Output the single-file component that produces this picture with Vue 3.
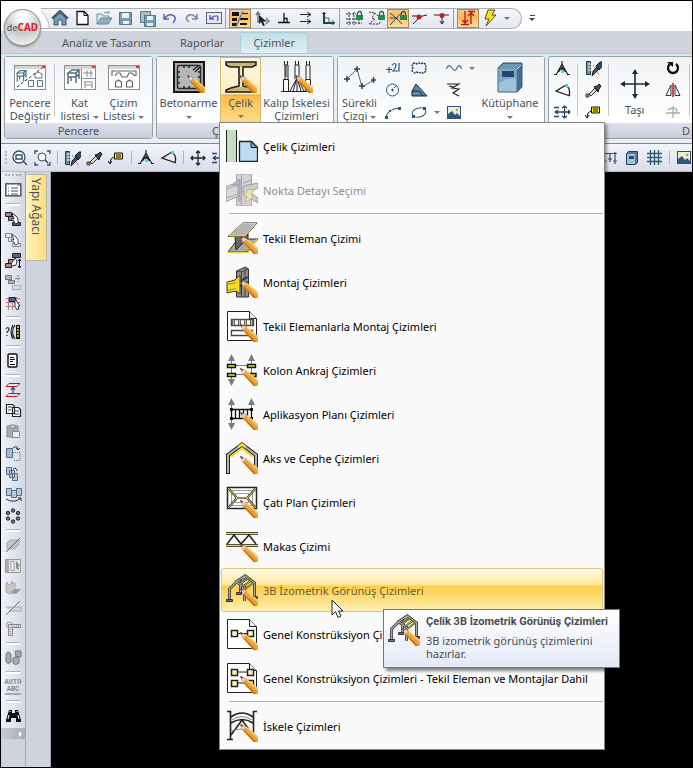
<script setup>
import { h } from 'vue'

const pencil = '<path d="M17 20.500l3-3.500L32 26.500V32h-4.500z" fill="#f0a22c"/><path d="M19.500 17.500l1-1L32 26v2.500z" fill="#f9c873"/><path d="M17 20.500L28 32h2.500L18 20z" fill="#b8741c"/><path d="M14.500 14.500l6 2.200-1 2.300-2.500 1.500z" fill="#f3cdb0" stroke="#a07860" stroke-width=".5"/><path d="M14 14l3 1.200-1.500 1.800z" fill="#4a2a30"/>'
const lock = '<path d="M12.500 5V3.500a2 2 0 0 1 4 0V5" fill="none" stroke="#186b3c" stroke-width="1.300"/><rect x="11" y="5" width="7" height="5" fill="#1f8b4c"/>'
const brushHead = '<path d="M8 11l4-4 2 2-4 4-3 3z" fill="#555" stroke="#222"/><path d="M11 6l4-4h3v3l-4 5z" fill="#2b4a66" stroke="#111"/>'
const frame3d = '<g fill="none" stroke="#3c3c3c" stroke-width="3"><path d="M3.500 26V15l7-7M14.500 19V10l5-8 9 7v14M10 8l9-6M18.500 27V13l-8-5"/></g><g fill="none" stroke="#a9a9a9" stroke-width="1.400"><path d="M3.500 26V15l7-7M14.500 19V10l5-8 9 7v14M10 8l9-6M18.500 27V13l-8-5"/></g><path d="M14 10l9-6M17 12.500l8-6M19 15l8-6" stroke="#3c3c20" stroke-width="2"/><path d="M14 10l9-6M17 12.500l8-6M19 15l8-6" stroke="#cdbd40"/><path d="M.5 25.500h6v2h-6zM10.500 18.500h5v2h-5zM25.500 22.500h6v2h-6z" fill="#777" stroke="#333"/>'
const sheet = '<path d="M1.500 1.500h22l7 7v22h-29z" fill="#fff" stroke="#222"/><path d="M23.500 1.500v7h7" fill="#eee" stroke="#222"/>'
const win = '<rect x=".5" y=".5" width="31" height="24" fill="#fff" stroke="#8d8d8d"/><path d="M1 2.500h30" stroke="#d5d5d5" stroke-width="3"/><path d="M28 1h3v2h-3z" fill="#e33"/>'
const cube = '<path d="M4 8l4-3h7l-3 3zM4 8v11M12 8v10M15 5v9M7 12v4M4 12h8l3-3" fill="none" stroke="#4d7088" stroke-width="1.500"/>'

// name: [width, height, shapes]
const icons = {
  home: [18, 16, '<path d="M3 8v7h4v-5h4v5h4V8L9 3z" fill="#7d9bb0" stroke="#37556b"/><path d="M1 8.500L9 1l8 7.500" fill="none" stroke="#37556b" stroke-width="2"/>'],
  file: [14, 16, '<path d="M2 1.500h7l4 4v9H2z" fill="#fff" stroke="#111" stroke-width="1.300"/><path d="M9 1.500v4h4" fill="none" stroke="#111"/>'],
  open: [18, 16, '<path d="M2 14V4h5l1 2h6v2" fill="#dde8ee" stroke="#6f94a8"/><path d="M2 14l4-6h11l-4 6z" fill="#8fb0c0" stroke="#5f8498"/><path d="M9 3q3-2 5 0m0-2v2h-2" fill="none" stroke="#6f94a8"/>'],
  save: [16, 16, '<path d="M1.500 2.500h12v12h-12z" fill="#7b9caf" stroke="#52788e"/><path d="M4 3h7v5H4zM5 11h6v3H5z" fill="#e9f1f5"/>'],
  saveAll: [18, 17, '<path d="M1.500 1.500h10v11h-10z" fill="#a9c0cc" stroke="#52788e"/><path d="M5.500 5.500h11v11h-11z" fill="#7b9caf" stroke="#52788e"/><path d="M8 6h6v4H8zM8 13h6v3H8z" fill="#e9f1f5"/>'],
  undo: [16, 12, '<path d="M2 2v5h5M2 7q4-5 8-4 4 1 3 5l-2 3" fill="none" stroke="#5f5fb0" stroke-width="1.500"/>'],
  redo: [16, 12, '<path d="M13 2v5H8M13 7Q10 2 5 3 1 5 3 8l2 2" fill="none" stroke="#7c85b8" stroke-width="1.500"/>'],
  undoBox: [16, 12, '<rect x=".5" y=".5" width="15" height="11" fill="#e6e9f2" stroke="#5b6478"/><path d="M4 3v4h4M4 7q4-4 7-3 2 2 0 5" fill="none" stroke="#5f5fb0" stroke-width="1.300"/>'],
  layers: [20, 18, '<path d="M2 2h7v4H2zM12 3h6v1h-6zM2 8h5v3H2zM10 8h8v2h-8zM2 13h5v3H2zM10 13h7v2h-7z" fill="#111"/><path d="M6 17L13 1" stroke="#5b87a8" stroke-width="1.500"/>'],
  axes: [16, 16, '<path d="M4 13V2M2 5l2-3 2 3M4 11h9M12 8l3 3-3 3" fill="none" stroke="#6c7f96" stroke-width="1.500"/><path d="M5 5l7 6-3 .5 2 4-2 .5-2-4-2 2z" fill="#222"/>'],
  perp: [14, 12, '<path d="M1 10.500h12M7 1v9M7 6.500h3v4" fill="none" stroke="#111" stroke-width="1.300"/>'],
  parallel: [14, 14, '<path d="M1 3.500h11M1 10.500h11M8 1l4 2.500L8 6M8 8l4 2.500L8 13" fill="none" stroke="#222"/>'],
  ortho: [15, 14, '<path d="M3 1v11h11" fill="none" stroke="#27404f" stroke-width="2"/><path d="M4 7h4v4M11 9l3 3-3 2M1 3l2-2 2 2" fill="none" stroke="#3d6d5d"/>'],
  gridLock: [18, 16, '<path d="M4 2v13M9 2v13M14 9v6M1 4h10M1 9h12M1 13h16" stroke="#333" stroke-dasharray="2 1"/>' + lock],
  polyLock: [18, 16, '<path d="M2 2l6 1-3 5 3 1-6 5h10l2-3M8 3l3 3" fill="none" stroke="#333" stroke-dasharray="2 1"/>' + lock],
  snapLock: [18, 16, '<path d="M1 3l6 5 6 6M13 2L1 15M1 8h8" stroke="#2b4560" fill="none"/>' + lock],
  snapEnd: [18, 14, '<path d="M2 13l7-7M7 6l9-2M1 5h6" stroke="#222"/><circle cx="8" cy="6" r="2.500" fill="#d01818"/>'],
  snapMid: [18, 14, '<path d="M1 4h15M9 5v8M7 10l2 3 2-3" stroke="#222" fill="none"/><circle cx="9" cy="4.500" r="2.500" fill="#d01818"/>'],
  updown: [16, 16, '<path d="M5 1v12M2 10l3 3 3-3M1 14.500h8M11 14V3M8 6l3-3 3 3M8 1.500h7" fill="none" stroke="#c01010" stroke-width="1.300"/>'],
  bolt: [16, 18, '<path d="M6 1h7l-3 5h4L4 17l3-7H3z" fill="#f2e428" stroke="#55500a"/>'],
  winSwitch: [32, 25, win + '<g transform="scale(.8) translate(0 2)">' + cube + '</g><path d="M3 22L28 3" stroke="#333" stroke-dasharray="3 2"/><path d="M14.500 15.500h5v6h-5zM23.500 15.500h5v6h-5zM21 9l3-2 4 2v4h-7z" fill="none" stroke="#5a7482"/>'],
  winFloor: [32, 25, win + cube + '<path d="M17.500 4v20M17 13.500h14M19 8h10M23 5v7M27 5v7M20 17h8M21 17v6M28 17v6M21 20h7" stroke="#7f8b92" fill="none"/>'],
  winDraw: [32, 25, win + '<path d="M4 11V6h24v5M7 11l2-3h3l2 4h5l2-4h3l3 3M7.500 22v-5l3-2 3 2v5zM18.500 22v-5l3-2 3 2v5z" fill="none" stroke="#5c6a72" stroke-width="1.200"/>'],
  concrete: [32, 32, '<rect x="1" y="1" width="30" height="30" fill="#a9a9a9" stroke="#1a1717" stroke-width="2"/><rect x="4.500" y="4.500" width="23" height="23" rx="2" fill="#b7b7b7" stroke="#2a2a2a" stroke-width="1.500"/><path d="M11 5v2M16 5v2M5 11h2M5 16h2M5 22h2M11 27v-2M16 27v-2M27 11h-2M27 16h-2M20 9l5-4M22 11l5-5" stroke="#222" stroke-width="1.500"/>' + pencil],
  steel: [32, 32, '<path d="M1 1h30v3l-4 2H18v19l8 2 5 2v2H1v-2l5-2 8-2V6H5L1 4z" fill="#c9b870" stroke="#191919" stroke-width="1.500"/><path d="M16 6v20" stroke="#eee5c0" stroke-width="2"/>' + pencil],
  scaffold: [32, 32, '<g fill="none" stroke="#222"><path d="M3.500 0v4h3V0M5 4v12M4 4v14M7 4v14M2.500 18.500h5v12h-5zM14.500 0v4h3V0M14 4v14M18 4v14M25.500 0v4h3V0M25 4v14M29 4v14M24.500 18.500h5v12h-5zM0 30.500h30M9 30l7-13 7 13M12 30l4-13 4 13M16 18v12"/></g>' + pencil],
  polyline: [32, 24, '<path d="M3 14L13 4l5 18 12-7" fill="none" stroke="#4b6f8a"/><path d="M0 14h6M3 11v6M10 4h6M13 1v6M15 21h6M18 18v6M27 15h5M29.500 12v6" stroke="#27465e" stroke-width="1.500"/>'],
  plusTwo: [14, 12, '<path d="M0 7.500h6M3 5v6M6 3q3-3 4 0 0 3-3 6h6V1" fill="none" stroke="#2d5878" stroke-width="1.200"/>'],
  cloud: [16, 12, '<path d="M2 2q2-2 4 0 2-2 4 0 2-2 4 0 2 2 0 4 2 2 0 4-2 2-4 0-2 2-4 0-2 2-4 0-2-2 0-4-2-2 0-4z" fill="#eaf3fb" stroke="#13293b" stroke-width="1.300" stroke-dasharray="2 1"/>'],
  wave: [16, 8, '<path d="M0 5q3-6 6-1t5 0 5 1" fill="none" stroke="#4b7da0" stroke-width="1.300"/>'],
  circle: [16, 14, '<circle cx="7.500" cy="7" r="6" fill="none" stroke="#2d5878"/><path d="M6 7h3M7.500 5.500v3M9 5l3-3" stroke="#2d5878"/>'],
  wedge: [16, 14, '<path d="M1 13V8L5 1l11 12z" fill="#5d87a5" stroke="#16262f"/><path d="M1 8h7l4 5" fill="none" stroke="#16262f"/>'],
  zig: [14, 14, '<path d="M0 1h12L5 5l7 1-6 4 6 3M2 3l4 1" fill="none" stroke="#222" stroke-width="1.200"/>'],
  arc: [16, 13, '<path d="M1 11Q3 3 14 2" fill="none" stroke="#2d5878" stroke-width="1.200"/><path d="M0 10h3v3H0zM13 1h3v3h-3zM4 4h2v2H4z" fill="#2d5878"/>'],
  ellipse: [16, 13, '<ellipse cx="8" cy="6.500" rx="7" ry="4.500" fill="none" stroke="#2d5878" transform="rotate(-15 8 6.500)"/><path d="M1 9h3v3H1zM12 1h3v3h-3z" fill="#2d5878"/>'],
  picture: [14, 13, '<rect x=".5" y=".5" width="13" height="12" fill="#e5efd9" stroke="#2d5070"/><path d="M1 12V8l4-3 3 4 2-2 3 3v2z" fill="#2f5876"/><circle cx="10" cy="4" r="1.300" fill="#d29040"/>'],
  book: [26, 32, '<path d="M1 7l5-5h19v24l-5 5H1z" fill="#3e6f8c" stroke="#3d5c70"/><path d="M1.500 7.500h18v23h-18z" fill="#9fc3da"/><path d="M2 8h17v10q-8-2-17 4z" fill="#7da8c4"/><path d="M2 7l4-4h18l-4 4z" fill="#6d9aae"/><path d="M20 8l4-4" stroke="#d5e8f0"/><rect x="5" y="10" width="12" height="6" fill="#24486a"/>'],
  compassA: [16, 15, '<path d="M7 8h3v4H7z" fill="#39e2f0"/><path d="M8 0v4M8 3L2 14M8 3l6 11M4.500 11L8 6l3.500 5M8 6v3M0 13.500h3M13 13.500h3" fill="none" stroke="#222" stroke-width="1.200"/>'],
  angle: [17, 15, '<path d="M16 13L2 8l10-6M12 2q5 4 3 11M2 8l4-2" fill="none" stroke="#222" stroke-width="1.300"/><path d="M11 1h3v3h-3z" fill="#2ae0f0"/>'],
  moveH: [17, 14, '<path d="M0 2.500h5M0 11.500h5M1 7h15M10.500 1v12M8 3l2.500-2L13 3M8 11l2.500 2 2.500-2M14 5l2 2-2 2M4 5L1 7l3 2" fill="none" stroke="#27465e" stroke-width="1.300"/>'],
  ruler: [17, 16, '<path d="M1.500 1.500h4v13h-4z" fill="#6d8ca5" stroke="#27404f"/><path d="M3 4h3M3 7h3M3 10h3" stroke="#fff"/><path d="M7 15l8-8M8 5l6 10" stroke="#999"/>' + brushHead],
  brush: [17, 16, '<path d="M1 12h3v3H1z" fill="#888" stroke="#444"/><path d="M4 12l6-6 2 2-6 6z" fill="#e5d9c0" stroke="#333"/><path d="M9 5l3-1 2-2 2 2-2 3-1 3z" fill="#3d4c58" stroke="#111"/>'],
  note: [16, 14, '<path d="M6.500 2h8v6h-8z" fill="#f8ee1c" stroke="#111"/><path d="M8 4h5M8 6h5M6 6Q2 7 2 12M0 10l2 3 2-3" fill="none" stroke="#111"/>'],
  move: [30, 30, '<path d="M15 3v24M3 15h24" stroke="#202a30" stroke-width="1.600"/><path d="M15 0l3 5h-6zM15 30l3-5h-6zM0 15l5-3v6zM30 15l-5-3v6z" fill="#202a30"/>'],
  rotate: [14, 14, '<path d="M4 3a5 5 0 1 0 6 0" fill="none" stroke="#111" stroke-width="2.300"/><path d="M1 1h6v5z" fill="#111"/>'],
  mirror: [16, 14, '<path d="M1 12.500h5V2zM15 12.500h-5V2z" fill="#fff" stroke="#333"/><path d="M8 0v14" stroke="#b01c1c" stroke-width="1.500"/>'],
  scaleOff: [16, 14, '<path d="M1 8h14M8 1v12M3 5q5-4 9 0l-2 4" fill="none" stroke="#a5adb5" stroke-width="1.300"/>'],
  zoomBox: [16, 16, '<circle cx="7" cy="7" r="6" fill="#fff" stroke="#34506a" stroke-width="1.300"/><path d="M4 5h6v4H4zM11 11l4 4" fill="none" stroke="#34506a" stroke-width="1.500"/>'],
  zoomAll: [17, 16, '<path d="M1 4V1h3M13 1h3v3M16 12v3h-3M4 15H1v-3" fill="none" stroke="#34506a" stroke-width="1.300"/><circle cx="8" cy="7" r="4" fill="#fff" stroke="#34506a"/><path d="M11 10l3 3" stroke="#34506a" stroke-width="1.500"/>'],
  moveS: [16, 16, '<path d="M8 1v14M1 8h14M6 3l2-2 2 2M6 13l2 2 2-2M3 6L1 8l2 2M13 6l2 2-2 2" fill="none" stroke="#222" stroke-width="1.300"/>'],
  dims: [16, 14, '<path d="M1 2.500h14M2 1v12M8 2v4M13 1v12M0 10h4M11 10h4M6 8h4M8 6v5" fill="none" stroke="#34506a" stroke-width="1.200"/>'],
  bookS: [14, 16, '<path d="M1.500 3.500l2-2h9v11l-2 2h-9z" fill="#4f7f9c" stroke="#24405a"/><path d="M2 4h8v10H2z" fill="#9fc3da"/><path d="M4 6h5v3H4z" fill="#24486a"/>'],
  grid: [15, 15, '<path d="M3.500 0v15M7.500 0v15M11.500 0v15M0 3.500h15M0 7.500h15M0 11.500h15" stroke="#2d5878" stroke-width="1.300"/>'],
  list: [17, 14, '<rect x=".8" y=".8" width="15" height="12" fill="#fff" stroke="#555" stroke-width="1.500"/><path d="M3 5h1M3 8h1M3 11h1M6 5h7M6 8h7M6 11h7" stroke="#2f5876"/><path d="M12 2h3" stroke="#e33"/>'],
  maskA: [16, 16, '<path d="M.5 1.500h6v4h-6zM3.500 5.500h6v4h-6z" fill="#b48080" stroke="#222"/><path d="M7.500 11.500h8v3h-8z" fill="#5c5c88" stroke="#222"/><path d="M7 2l4 3 2 3v4l-3 1-1-3-3-2 1-1 2 1z" fill="#fff" stroke="#222" stroke-width=".9"/>'],
  maskB: [16, 16, '<path d="M.5 1.500h6v4h-6zM3.500 5.500h6v4h-6zM7.500 11.500h8v3h-8z" fill="#e6e6ea" stroke="#888"/><path d="M7 2l4 3 2 3v4l-3 1-1-3-3-2 1-1 2 1z" fill="#fff" stroke="#444" stroke-width=".9"/>'],
  maskC: [16, 16, '<path d="M7.500.5h8v4h-8z" fill="#5c5c88" stroke="#222"/><path d="M3.500 6.500h5v4h-5zM.5 10.500h6v4h-6z" fill="#b48080" stroke="#222"/><path d="M10 5l2 3-1 4-4 1-1-2 2-3z" fill="#fff" stroke="#222" stroke-width=".9"/><path d="M14.500 6v9M13 8l1.500-2L16 8M13 13l1.500 2 1.500-2" stroke="#111" fill="none"/>'],
  maskD: [16, 16, '<path d="M.5 1.500h6v4h-6zM3.500 6.500h6v3h-6z" fill="#b4b4b4" stroke="#777"/><path d="M7.500 11.500h8v4h-8z" fill="#d8dae2" stroke="#aaa"/><path d="M13 1v7M10 4.500h6" stroke="#777" stroke-dasharray="2 1"/>'],
  table: [16, 16, '<path d="M1 3.500h14M1 7.500h14M1 11.500h12M3.500 2v13M7.500 2v13M11.500 2v13" stroke="#b08080"/><path d="M4.500 2.500h6v4h-6z" fill="#5c5c88" stroke="#222"/><path d="M10 4l5 7h-2l1 3-2 .5-2-3z" fill="#fff" stroke="#222" stroke-width=".9"/>'],
  query: [16, 16, '<path d="M1 5q2-3 3 0 0 2-2 3v1M2 11v1M10 1Q5 8 10 15M8 1Q4 8 8 15" fill="none" stroke="#222" stroke-width="1.200"/><path d="M11 1h4v14h-4z" fill="#111"/><path d="M13 2v12" stroke="#f5e63c" stroke-width="1.500" stroke-dasharray="2 1"/>'],
  page: [12, 16, '<rect x="1" y="1" width="9" height="13" rx="1" fill="#fff" stroke="#111" stroke-width="1.400"/><path d="M3 4.500h4M3 6.500h5M3 8.500h3M3 11.500h5" stroke="#111"/>'],
  level: [16, 16, '<path d="M1 4.500L4 1.500h11l-3 3zM1 14.500l3-3h11l-3 3z" fill="none" stroke="#b01c1c"/><path d="M8 12V6M6 8l2-3 2 3" stroke="#2d5878" fill="none" stroke-width="1.300"/>'],
  copy: [17, 15, '<path d="M1.500 1.500h6l2 2v7h-8zM7.500 4.500h6l2 2v7h-8z" fill="#fff" stroke="#222" stroke-width="1.200"/><path d="M3 4h4M3 7h3M9 8h5M9 11h5" stroke="#345"/>'],
  paste: [16, 15, '<path d="M2 2h11v11H2z" fill="#aaa" stroke="#888"/><path d="M5 1h5v3H5z" fill="#ddd" stroke="#888"/><path d="M7.500 7.500h7v6h-7z" fill="#eee" stroke="#888"/>'],
  moveSel: [16, 16, '<path d="M1.500 3.500h6v9h-6z" fill="#a9b8d0" stroke="#566a88"/><path d="M8 7.500h7v8H8" fill="none" stroke="#566a88" stroke-dasharray="1 1"/><path d="M8 3q4-3 5 1M11 3l2 2 2-2" fill="none" stroke="#123a4a"/>'],
  copySel: [16, 16, '<path d="M1.500 1.500h5v7h-5zM4.500 4.500h5v7h-5zM7.500 7.500h5v7h-5z" fill="#b9c6dc" stroke="#566a88"/><path d="M8 3q4-2 4 2" fill="none" stroke="#123a4a"/>'],
  arraySel: [17, 16, '<path d="M1.500 1.500h5v7h-5zM6.500 3.500h5v7h-5zM11.500 1.500h5v7h-5z" fill="#b9c6dc" stroke="#566a88"/><path d="M1 12q8 5 15-1M13 11h3v3" fill="none" stroke="#123a4a"/>'],
  ring: [16, 16, '<g fill="#777" stroke="#222"><circle cx="8" cy="2.500" r="1.700"/><circle cx="13" cy="5" r="1.700"/><circle cx="13" cy="10.500" r="1.700"/><circle cx="8" cy="13.500" r="1.700"/><circle cx="3" cy="10.500" r="1.700"/><circle cx="3" cy="5" r="1.700"/></g>'],
  cutOff: [16, 16, '<path d="M2 6l3-3h9v4l-4 5H2z" fill="#c4c4c4" stroke="#aaa"/><path d="M1 15L15 1" stroke="#666"/>'],
  stretchOff: [16, 16, '<path d="M.5 1.500h15v13H.5z" fill="#e2e2e2" stroke="#999"/><path d="M1 2h3v12H1z" fill="#aaa"/><path d="M6 3.500h3v9H6z" fill="#fff" stroke="#999"/><path d="M11 3l4 5h-2l1 3-2 .5-1-3z" fill="#888"/>'],
  raiseOff: [17, 16, '<path d="M1 6l1-3 1 3 3-1 1-3 1 3 2-1v7l-5 4-4-2z" fill="#c6c6c6" stroke="#aaa"/><path d="M5 14l5-4h6l-5 5z" fill="#999"/>'],
  trimOff: [17, 16, '<path d="M1 7h15v4H5" fill="#d5d5d5" stroke="#aaa"/><path d="M1 15L15 1" stroke="#777"/>'],
  cornerOff: [17, 16, '<path d="M3.500 3.500h12v3h-8v8h-4z" fill="#e4e4e4" stroke="#888"/><path d="M9 5h6M5.500 8v6" stroke="#aaa" stroke-width="2" stroke-dasharray="1 1"/><circle cx="4.500" cy="4" r="3" fill="none" stroke="#999"/>'],
  mergeOff: [17, 16, '<path d="M1 4q2-4 5 0v8q-3 3-5 0zM8 8q4-3 6 0v5q-4 3-6 0zM10 1h6v6h-5z" fill="#aaa" stroke="#777"/>'],
  find: [17, 15, '<path d="M1 12L4 2h3v3h3V2h3l3 10v2h-5v-4H6v4H1z" fill="#111"/><path d="M4 7l-1 4M13 7l1 4M5 3v1M12 3v1" stroke="#fff"/>'],
  mSteel: [32, 32, '<path d="M0 0h10v32H0z" fill="#c3dcc2"/><path d="M.5 0v32M10.500 0v32" stroke="#222"/><path d="M13.500 11.500h12l6 6v14h-18z" fill="#badcf5" stroke="#222" stroke-width="1.300"/><path d="M25 11.500v6h6z" fill="#8ca6b8" stroke="#222"/>'],
  mNode: [32, 32, '<path d="M10.500 0h5v32h-5zM15.500 0h10v32h-10z" fill="#d4d4d4" stroke="#a4a4a4"/><path d="M0 12.500l12-4v14L0 27.500z" fill="#d8d8d8" stroke="#9c9c9c"/><path d="M0 15l12-4M0 24l12-4" stroke="#a8a8a8"/><path d="M17 12l15-3v5l-9 4 9 6v5l-15-9z" fill="#ccc" stroke="#9c9c9c"/><path d="M13.500 5v23" stroke="#b7a4c4" stroke-width="2.500"/><path d="M6 11l7-6v6zM17 9l8-3" stroke="#a894b8" fill="#c4b2d0"/><path d="M23 15l5 1-3 5h4l-10 8 2-7h-4z" fill="#e6e3b4" stroke="#bbb893"/>'],
  mBeam: [32, 32, '<path d="M2 30l10-13h20L21 30z" fill="#aaa" stroke="#222"/><path d="M2 30.500h20L31 17" fill="none" stroke="#e5cf3a" stroke-width="1.500"/><path d="M9 14l13-4v6l-12 12z" fill="#666" stroke="#222"/><path d="M2 14.500L17 1h14L19 14.500z" fill="#b5b5b5" stroke="#222"/><path d="M3 14L17 1.500h13L19 14z" fill="none" stroke="#efd940"/>' + pencil],
  mJoint: [32, 32, '<path d="M10.500 5l9-4 3 2v28h-12z" fill="#8f8f8f" stroke="#333"/><path d="M15.500 5v26M19 2v29M10.500 5l5 1 7-3" fill="none" stroke="#444"/><path d="M14 15l8-4M14 20l8-4" stroke="#333" stroke-width="1.500"/><path d="M1 16l8-2 5-5v19l-4-3-9 2z" fill="#f5dc32" stroke="#443c10"/><path d="M1 18.500l9-2M1 24.500l9-2" stroke="#a89214"/>' + pencil],
  mSheetRows: [32, 32, sheet + '<path d="M5.500 9.500h22v6h-22zM5.500 20.500h21v5h-21z" fill="#fff" stroke="#444" stroke-width="1.300"/><path d="M7.500 9v7M13.500 9v7M19.500 9v7M25.500 9v7" stroke="#555" stroke-width="3"/><path d="M7.500 10v5M13.500 10v5M19.500 10v5M25.500 10v5" stroke="#d8c84a" stroke-width="1.200"/>' + pencil],
  mAnchor: [32, 32, '<path d="M5.500 2v28M25.500 2v20M2 11.500h28M2 20.500h28" stroke="#777"/><path d="M5.500 0L9 7H2zM25.500 0L29 7h-7zM5.500 32L9 25H2z" fill="#7b7b7b"/><path d="M1.500 10.500h8v3h-8zM21.500 10.500h8v3h-8zM1.500 19.500h8v3h-8zM22 19.500h8v3h-8z" fill="#f0dc3a" stroke="#111" stroke-width="1.400"/>' + pencil],
  mPlan: [32, 32, '<path d="M5.500 2v28M25.500 2v20" stroke="#777"/><path d="M5.500 0L9 7H2zM25.500 0L29 7h-7zM5.500 32L9 25H2z" fill="#7b7b7b"/><path d="M5.500 11.500h20v9h-20zM9.500 11v10M13.500 11v10M17.500 11v10M21.500 11v10" fill="none" stroke="#111" stroke-width="1.300"/><path d="M4 10h3v3H4zM24 10h3v3h-3zM4 19h3v3H4zM24 19h3v3h-3z" fill="#111"/>' + pencil],
  mAxis: [32, 32, '<path d="M5 15l4-4 7-5 7 5 4 4" fill="none" stroke="#f2dc3c" stroke-width="3"/><path d="M2 32V13L16 2.500 30 13v19" fill="none" stroke="#222" stroke-width="4"/><path d="M2 31V13L16 2.500 30 13v18" fill="none" stroke="#b5b5b5" stroke-width="2"/><path d="M12.500 5L16 2.500 19.500 5" stroke="#f2dc3c" stroke-width="2.500" fill="none"/>' + pencil],
  mRoof: [32, 32, '<path d="M1.500 1.500h29v21h-29zM5.500 4.500h21v15h-21zM9.500 7.500h13v9h-13z" fill="#fff" stroke="#999"/><path d="M1.500 1.500h29v21h-29z" fill="none" stroke="#222" stroke-width="1.500"/><path d="M2 2l9 10h10l9-10M2 22l9-10M30 22l-9-10" fill="none" stroke="#333" stroke-width="2.200"/><path d="M2 2l9 10h10l9-10M2 22l9-10M30 22l-9-10" fill="none" stroke="#f0dc50"/>' + pencil],
  mTruss: [32, 32, '<path d="M0 3.500h32M0 15.500h32" stroke="#222" stroke-width="3.200"/><path d="M0 3.500h32M0 15.500h32" stroke="#efdc48" stroke-width="1.300"/><path d="M1 14L8 5l7 9 8-9 7 9" fill="none" stroke="#222" stroke-width="1.500"/>' + pencil],
  mFrame: [32, 32, frame3d + pencil],
  mSheetTwo: [32, 32, sheet + '<path d="M11 15.500h10" stroke="#222"/><path d="M5.500 12.500h6v6h-6zM21.500 12.500h6v6h-6z" fill="#fff8c4" stroke="#222" stroke-width="1.500"/>' + pencil],
  mSheetFour: [32, 32, sheet + '<path d="M11 10h10M11 21h10" stroke="#222"/><path d="M5.500 7.500h6v6h-6zM21.500 7.500h6v6h-6zM5.500 18.500h6v6h-6zM21.500 18.500h6v6h-6z" fill="#fff6b0" stroke="#222" stroke-width="1.500"/>' + pencil],
  mScaffold: [32, 32, '<path d="M1 1.500h3.500v28M1 29.500h6M31 1.500h-3.500v28M5 7q11-8 22 0M5 13q11-7 22 0M5 25l11-15 11 15" fill="none" stroke="#222" stroke-width="1.600"/><path d="M6 10q10-7 20 0M5 21q9-3 15-1" fill="none" stroke="#888"/>' + pencil],
}

const Icon = (props) => {
  const [w, ht, shapes] = icons[props.name]
  return h('svg', { width: w, height: ht, viewBox: `0 0 ${w} ${ht}`, 'aria-hidden': 'true', innerHTML: shapes })
}
Icon.props = ['name']

const quick = [
  ['home', 'file', 'open', 'save', 'saveAll', 'undo', 'redo', 'undoBox'],
  ['layers', 'axes', 'perp', 'parallel', 'ortho'],
  ['gridLock', 'polyLock', 'snapLock', 'snapEnd', 'snapMid'],
  ['updown', 'bolt'],
]
const active = ['layers', 'snapLock', 'updown']

const toolsLeft = [['zoomBox', 'zoomAll'], ['ruler', 'brush', 'note'], ['compassA', 'angle'], ['moveS', 'moveH']]
const toolsRight = [['dims', 'bookS', 'grid'], ['picture']]

const side = [
  ['list'],
  ['maskA', 'maskB', 'maskC', 'maskD', 'table'],
  ['query'],
  ['page'],
  ['level', 'copy', 'paste', 'moveSel', 'copySel', 'arraySel', 'ring'],
  ['cutOff', 'stretchOff', 'raiseOff', 'trimOff', 'cornerOff'],
  ['mergeOff'],
  ['auto'],
  ['find'],
]

const menu = [
  [
    { icon: 'mSteel', label: 'Çelik Çizimleri' },
    { icon: 'mNode', label: 'Nokta Detayı Seçimi', disabled: true },
  ],
  [
    { icon: 'mBeam', label: 'Tekil Eleman Çizimi' },
    { icon: 'mJoint', label: 'Montaj Çizimleri' },
    { icon: 'mSheetRows', label: 'Tekil Elemanlarla Montaj Çizimleri' },
    { icon: 'mAnchor', label: 'Kolon Ankraj Çizimleri' },
    { icon: 'mPlan', label: 'Aplikasyon Planı Çizimleri' },
    { icon: 'mAxis', label: 'Aks ve Cephe Çizimleri' },
    { icon: 'mRoof', label: 'Çatı Plan Çizimleri' },
    { icon: 'mTruss', label: 'Makas Çizimi' },
    { icon: 'mFrame', label: '3B İzometrik Görünüş Çizimleri', hot: true },
    { icon: 'mSheetTwo', label: 'Genel Konstrüksiyon Çizimleri' },
    { icon: 'mSheetFour', label: 'Genel Konstrüksiyon Çizimleri - Tekil Eleman ve Montajlar Dahil' },
  ],
  [{ icon: 'mScaffold', label: 'İskele Çizimleri' }],
]
</script>

<template>
  <div class="app">
    <header class="title">
      <div class="quick">
        <div v-for="(set, i) in quick" :key="i" class="set">
          <button v-for="n in set" :key="n" class="cell" :class="{ on: active.includes(n) }" :aria-label="n"><Icon :name="n" /></button>
        </div>
        <button class="drop" aria-label="Daha fazla"><i class="caret"></i></button>
      </div>
      <button class="custom" aria-label="Özelleştir"><i class="bar"></i><i class="caret dark"></i></button>
      <button class="logo">de<b>CAD</b></button>
    </header>

    <nav class="tabs">
      <a href="#analiz">Analiz ve Tasarım</a>
      <a href="#raporlar">Raporlar</a>
      <a href="#cizimler" class="current">Çizimler</a>
    </nav>

    <section class="ribbon">
      <div class="group g1">
        <div class="tools">
          <button class="big"><span class="pic"><Icon name="winSwitch" /></span>Pencere<br>Değiştir</button>
          <span class="rule"></span>
          <button class="big"><span class="pic"><Icon name="winFloor" /></span>Kat<br>listesi <i class="caret"></i></button>
          <button class="big"><span class="pic"><Icon name="winDraw" /></span>Çizim<br>Listesi <i class="caret"></i></button>
        </div>
        <div class="name">Pencere</div>
      </div>

      <div class="group g2">
        <div class="tools">
          <button class="big wide"><span class="pic"><Icon name="concrete" /></span>Betonarme<br><i class="caret"></i></button>
          <div class="anchor">
            <button class="big open" aria-haspopup="menu" aria-expanded="true"><span class="pic"><Icon name="steel" /></span>Çelik<br><i class="caret"></i></button>
            <div class="menu" role="menu">
              <div v-for="(part, i) in menu" :key="i" class="part">
                <div v-for="m in part" :key="m.label" class="entry">
                  <button class="item" :class="{ hot: m.hot }" :disabled="m.disabled" role="menuitem"><Icon :name="m.icon" />{{ m.label }}</button>
                  <template v-if="m.hot">
                    <svg class="pointer" width="13" height="20" viewBox="0 0 13 20"><path d="M1 1v15l3.500-3.500L7 18.500l3-1.500-2.500-5H12z" fill="#fff" stroke="#222" /></svg>
                    <div class="tip" role="tooltip">
                      <Icon name="mFrame" />
                      <div>
                        <strong>Çelik 3B İzometrik Görünüş Çizimleri</strong>
                        <p>3B izometrik görünüş çizimlerini hazırlar.</p>
                      </div>
                    </div>
                  </template>
                </div>
              </div>
            </div>
          </div>
          <button class="big wider"><span class="pic"><Icon name="scaffold" /></span>Kalıp İskelesi<br>Çizimleri</button>
        </div>
        <div class="name start">Çizim</div>
      </div>

      <div class="group g3">
        <div class="tools">
          <button class="big"><span class="pic"><Icon name="polyline" /></span>Sürekli<br>Çizgi <i class="caret"></i></button>
          <div class="mini">
            <button v-for="n in ['plusTwo', 'cloud']" :key="n" :aria-label="n"><Icon :name="n" /></button><i></i>
            <button aria-label="wave"><Icon name="wave" /></button><i class="caret"></i>
            <button v-for="n in ['circle', 'wedge']" :key="n" :aria-label="n"><Icon :name="n" /></button><i></i>
            <button aria-label="zig"><Icon name="zig" /></button><i></i>
            <button v-for="n in ['arc', 'ellipse']" :key="n" :aria-label="n"><Icon :name="n" /></button><i class="caret"></i>
            <button aria-label="picture"><Icon name="picture" /></button><i></i>
          </div>
          <button class="big wide"><span class="pic"><Icon name="book" /></span>Kütüphane<br><i class="caret"></i></button>
        </div>
        <div class="name"></div>
      </div>

      <div class="group g4">
        <div class="tools">
          <div class="col"><button v-for="n in ['compassA', 'angle', 'moveH']" :key="n" :aria-label="n"><Icon :name="n" /></button></div>
          <span class="rule"></span>
          <div class="col"><button v-for="n in ['ruler', 'brush', 'note']" :key="n" :aria-label="n"><Icon :name="n" /></button></div>
          <span class="rule"></span>
          <button class="big"><span class="pic"><Icon name="move" /></span>Taşı</button>
          <div class="col"><button v-for="n in ['rotate', 'mirror', 'scaleOff']" :key="n" :aria-label="n"><Icon :name="n" /></button></div>
          <span class="rule"></span>
        </div>
        <div class="name end">D</div>
      </div>
    </section>

    <div class="toolbar">
      <span class="grip"></span>
      <div v-for="(set, i) in toolsLeft" :key="i" class="toolset">
        <button v-for="n in set" :key="n" class="cell" :aria-label="n"><Icon :name="n" /></button>
      </div>
      <span class="fill"></span>
      <div v-for="(set, i) in toolsRight" :key="i" class="toolset">
        <button v-for="n in set" :key="n" class="cell" :aria-label="n"><Icon :name="n" /></button>
      </div>
    </div>

    <div class="work">
      <aside class="strip">
        <div class="bar-tools">
          <span class="hgrip"></span>
          <div v-for="(set, i) in side" :key="i" class="sideset">
            <button v-for="n in set" :key="n" :aria-label="n">
              <span v-if="n === 'auto'" class="auto">AUTO<br>ABC</span>
              <Icon v-else :name="n" />
            </button>
          </div>
          <button class="more" aria-label="Genişlet"><i></i></button>
        </div>
      </aside>
      <div class="dock"><button class="docktab">Yapı Ağacı</button></div>
      <main class="canvas"></main>
    </div>
  </div>
</template>

<style>
body { background: #000; }
</style>

<style scoped>
* { box-sizing: border-box; }
.app {
  display: flex;
  flex-direction: column;
  min-height: 100vh;
  overflow: hidden;
  border: 1px solid #000;
  background: #cfd3dc;
  font: 11px/13px "Noto Sans", "Open Sans", sans-serif;
  color: #4c535c;
}
button {
  margin: 0;
  padding: 0;
  border: 0;
  background: none;
  font: inherit;
  color: inherit;
}
svg { display: block; flex: none; }
.caret {
  display: inline-block;
  border: 3px solid transparent;
  border-top-color: #777;
  border-bottom: 0;
  vertical-align: middle;
}
.title {
  position: relative;
  display: flex;
  align-items: center;
  height: 30px;
  padding: 4px 0 0 40px;
  background: #fff;
}
.quick {
  position: relative;
  display: flex;
  height: 21px;
  padding: 0 8px;
  overflow: hidden;
  border: 1px solid #a9adb8;
  border-left: 0;
  border-radius: 0 11px 11px 0;
  background: linear-gradient(#f4f5f9, #e4e7f0);
}
.quick::before {
  content: "";
  position: absolute;
  left: -46px;
  top: -6px;
  width: 53px;
  height: 53px;
  border: 1px solid #b7bbc5;
  border-radius: 50%;
  background: #fff;
}
.set { display: flex; }
.set + .set { border-left: 1px solid #9a9eaa; padding-left: 3px; }
.cell { display: grid; place-items: center; width: 22px; }
.on {
  border: 1px solid #a8884c;
  background: linear-gradient(#f5c890, #fdb75e 45%, #ffe29a);
}
.drop { width: 12px; }
.drop, .custom { display: grid; place-content: center; justify-items: center; }
.custom { width: 20px; gap: 2px; }
.bar { width: 5px; height: 1px; background: #444; }
.dark { border-top-color: #444; }
.logo {
  position: absolute;
  z-index: 3;
  left: 3px;
  top: 8px;
  width: 37px;
  height: 37px;
  border: 1px solid #8c8c8c;
  border-radius: 50%;
  background: radial-gradient(circle at 50% 20%, #fff 10%, #c9c9c9 50%, #f5f5f5 90%);
  font-size: 9px;
  text-align: center;
  white-space: nowrap;
  box-shadow: 0 1px 2px #777;
}
.logo b { color: #e02020; font-size: 10px; }
.tabs {
  display: flex;
  align-items: flex-end;
  height: 22px;
  padding-left: 48px;
  background: #cfd3dc;
}
.tabs a {
  padding: 3px 12px 4px;
  margin-right: 3px;
  border: 1px solid transparent;
  border-bottom: 0;
  color: inherit;
  text-decoration: none;
}
.tabs .current {
  border-color: #b3cdd8;
  border-radius: 3px 3px 0 0;
  background: linear-gradient(#c0dfe8, #e2f0f3);
}
.ribbon {
  display: flex;
  gap: 3px;
  height: 91px;
  padding: 2px 0 4px 3px;
  border-top: 1px solid #b9c6d0;
  border-bottom: 1px solid #858991;
  background: linear-gradient(#d3ecf3, #e9eef3 20px);
}
.group {
  display: flex;
  flex-direction: column;
  flex: none;
  border: 1px solid #9b9fa8;
  border-radius: 3px;
  background: #fbfcfd;
}
.g1 { width: 149px; }
.g2 { width: 178px; }
.g3 { width: 208px; }
.g4 { flex: 1 0 0; min-width: 0; overflow: hidden; border-right: 0; border-radius: 3px 0 0 3px; }
.tools {
  display: flex;
  flex: 1;
  min-height: 0;
  background: linear-gradient(#f1f3f5, #fff);
}
.name {
  height: 15px;
  text-align: center;
  line-height: 16px;
  background: linear-gradient(#dfe2ed, #c8ccdb);
}
.start { padding-left: 55px; text-align: left; }
.end { padding-right: 2px; text-align: right; }
.big {
  display: block;
  width: 43px;
  height: 66px;
  flex: none;
  white-space: nowrap;
  text-align: center;
}
.g1 .tools { padding-left: 4px; gap: 1px; }
.g1 .big:first-child { width: 42px; }
.wide { width: 63px; }
.wider { width: 71px; }
.pic { display: grid; place-items: center; height: 38px; }
.anchor { position: relative; }
.open {
  width: 41px;
  border: 1px solid #d3b868;
  background: linear-gradient(#fff8e4, #fdecc0 36px, #d9a84a 37px, #fdbb4c 38px, #ffdd8a);
}
.open .pic { height: 37px; }
.rule { width: 1px; margin: 7px 2px; background: #c3c7ce; }
.mini {
  display: grid;
  grid-template: repeat(3, 22px) / 24px 27px 10px 24px 12px;
  place-items: center;
}
.g3 .wide { width: 64px; }
.col { display: flex; flex-direction: column; width: 29px; }
.g4 .tools > .col:last-of-type { width: 32px; }
.col button { display: grid; place-items: center; height: 22px; }
.g4 .big { width: 47px; }

.menu {
  position: absolute;
  z-index: 5;
  left: -1px;
  top: 65px;
  width: 386px;
  padding: 1px;
  border: 1px solid #868686;
  background: #fafafa;
  box-shadow: 2px 2px 3px #0006;
}
.part + .part::before {
  content: "";
  display: block;
  height: 1px;
  margin: 1px 0 2px 8px;
  background: #b5b5b5;
}
.entry { position: relative; }
.item {
  display: flex;
  align-items: center;
  gap: 5px;
  width: 100%;
  height: 44px;
  padding: 0 4px;
  border: 1px solid transparent;
  border-radius: 3px;
  color: #000;
  white-space: nowrap;
}
.item:disabled { color: #8f8f8f; }
.hot {
  border-color: #dbc683;
  color: #625b45;
  background: linear-gradient(#fffde8, #ffe79c 38%, #ffcf4a 40%, #ffd766 60%, #fff0b4);
}
.pointer { position: absolute; z-index: 2; left: 110px; top: 31px; }
.tip {
  position: absolute;
  z-index: 3;
  left: 162px;
  top: 41px;
  display: flex;
  gap: 6px;
  width: 237px;
  padding: 4px;
  border: 1px solid #767676;
  background: linear-gradient(#fff, #e4e9f5);
  box-shadow: 3px 3px 3px #0007;
  color: #4c4c4c;
}
.tip strong { font-family: Roboto, "Noto Sans", sans-serif; white-space: nowrap; }
.tip p { margin: 6px 0 3px; }

.toolbar {
  display: flex;
  align-items: stretch;
  height: 28px;
  padding: 3px 0 3px 3px;
  border-bottom: 1px solid #b8bcc6;
  background: linear-gradient(#f3f5fb, #dadde9);
}
.toolset { display: flex; }
.toolset + .toolset {
  margin-left: 4px;
  padding-left: 3px;
  border-image: linear-gradient(transparent 20%, #b0b3bd 20% 80%, transparent 80%) 1;
  border-width: 0 0 0 1px;
  border-style: solid;
}
.toolset:last-child { margin-right: -3px; }
.grip { width: 3px; margin: 4px 1px; border-left: 2px dotted #b0b4c0; }
.fill { flex: 1; }

.work { display: flex; flex: 1; }
.strip { width: 25px; border-right: 1px solid #a3a8b3; }
.bar-tools {
  display: flex;
  flex-direction: column;
  background: linear-gradient(90deg, #f0f3fb, #d3d7e2);
}
.hgrip { height: 2px; margin: 2px 4px 3px; border-top: 2px dotted #adb1bc; }
.sideset { display: flex; flex-direction: column; }
.sideset + .sideset::before {
  content: "";
  height: 2px;
  margin: 3px 5px 2px;
  border-top: 1px solid #adb1bc;
  background: #fff;
}
.sideset button { display: grid; place-items: center; height: 21px; }
.auto { border-bottom: 2px solid #aaa; color: #888; font: bold 7px/7px "Liberation Mono", monospace; }
.more {
  display: grid;
  place-items: center end;
  height: 11px;
  margin-top: 2px;
  padding-right: 3px;
  background: linear-gradient(90deg, #c6cad5, #a9adb9);
}
.more i { border: 3px solid transparent; border-left-color: #fff; border-right: 0; }
.dock { width: 25px; padding-top: 2px; border-right: 1px solid #a3a8b3; }
.docktab {
  width: 21px;
  height: 87px;
  padding-top: 3px;
  border: 1px solid #b9b9a8;
  border-left: 0;
  background: linear-gradient(90deg, #fff3c0, #ffdd7c);
  font-size: 12px;
  text-align: start;
  writing-mode: vertical-rl;
}
.canvas { flex: 1; background: #000; }
</style>
